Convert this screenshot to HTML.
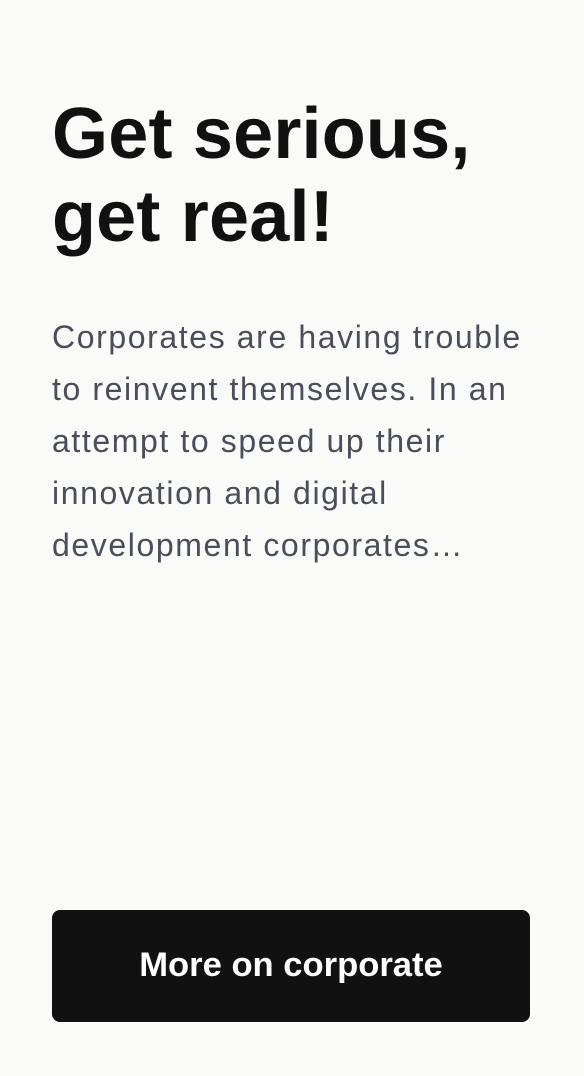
<!DOCTYPE html>
<html><head><meta charset="utf-8"><style>
html,body{margin:0;padding:0;}
body{width:584px;height:1076px;background:#fafaf8;position:relative;overflow:hidden;font-family:"Liberation Sans",sans-serif;}
h1{position:absolute;left:52px;top:93px;margin:0;font-size:72px;line-height:83px;font-weight:bold;color:#111;letter-spacing:0.2px;white-space:nowrap;}
p{position:absolute;left:52px;top:311px;margin:0;font-size:32px;line-height:52px;color:#4a4e5a;letter-spacing:1.6px;white-space:nowrap;}
.btn{position:absolute;left:52px;top:910px;width:478px;height:112px;background:#111;border-radius:8px;color:#fff;font-size:34.6px;font-weight:bold;line-height:110px;text-align:center;}
</style></head><body>
<h1>Get serious,<br>get real!</h1>
<p>Corporates are having trouble<br>to reinvent themselves. In an<br>attempt to speed up their<br>innovation and digital<br>development corporates…</p>
<div class="btn">More on corporate</div>
</body></html>
